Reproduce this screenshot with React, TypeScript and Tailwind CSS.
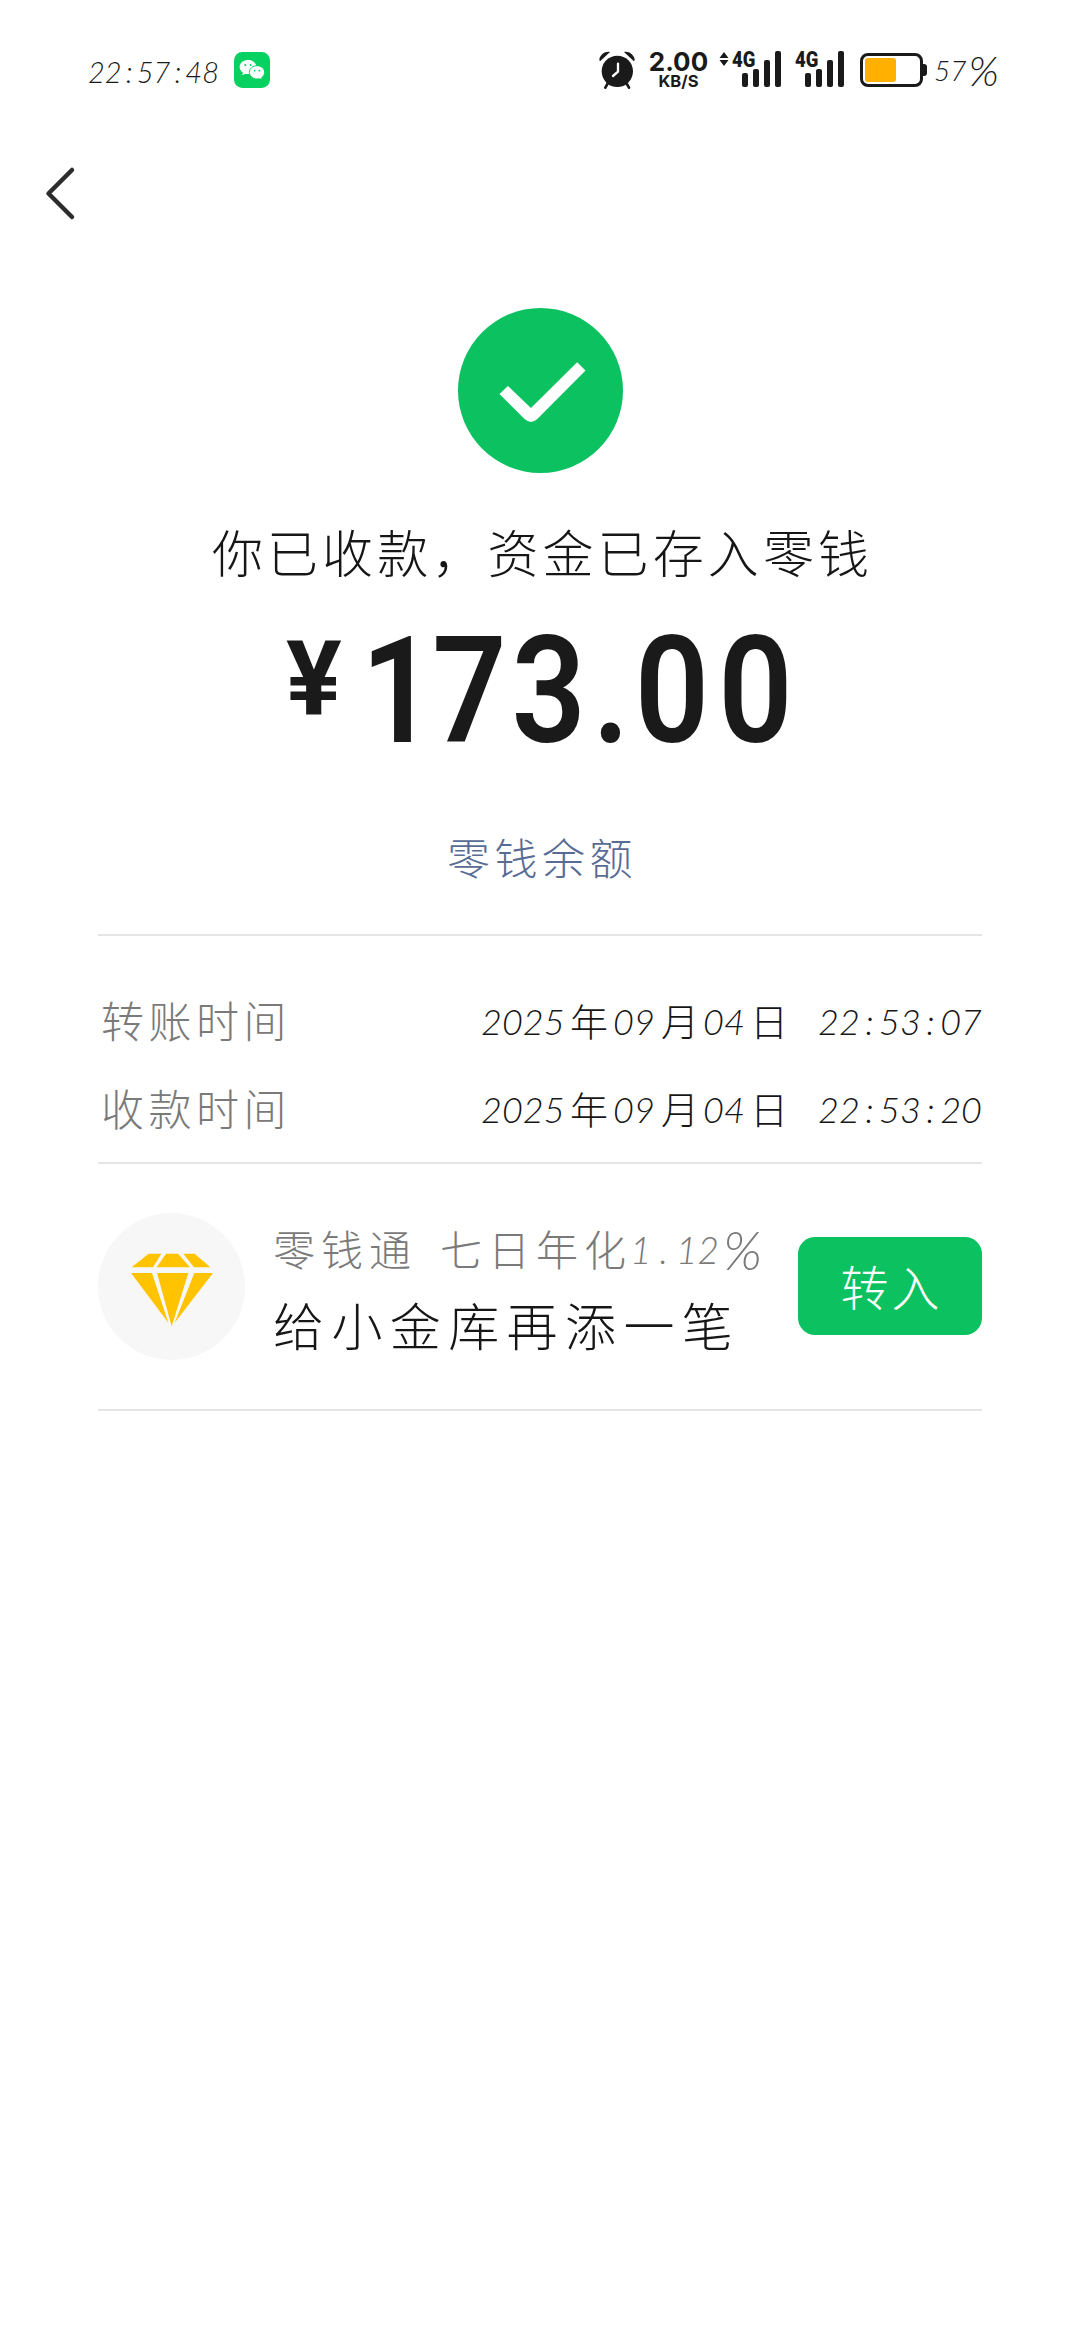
import React from 'react';

const HAND = "font-['Lato','Noto_Sans_CJK_SC',sans-serif] font-light";

function WeChatIcon() {
  return (
    <svg className="ml-[15px] h-9 w-9" viewBox="0 0 108 108">
      <rect width="108" height="108" rx="25" fill="#07d160" />
      <path d="M42 24C28 24 17 33 17 45c0 7 4 13 10 17l-3 8 10-5c3 1 5 1 8 1 14 0 25-9 25-21S56 24 42 24Z" fill="#fff" />
      <circle cx="34" cy="39" r="3" fill="#07d160" />
      <circle cx="50" cy="39" r="3" fill="#07d160" />
      <path d="M69 41c-13 0-23 9-23 20s10 20 23 20c3 0 5 0 8-1l8 4-2-7c5-4 9-9 9-16 0-11-10-20-23-20Z" fill="#fff" stroke="#07d160" strokeWidth="3" />
      <circle cx="62" cy="56" r="2.6" fill="#07d160" />
      <circle cx="76" cy="56" r="2.6" fill="#07d160" />
    </svg>
  );
}

function AlarmIcon() {
  return (
    <svg className="h-[38px] w-9" viewBox="0 0 108 114">
      <path d="M1 25C3 12 18 0 33 3L4 30Q0 30 1 25ZM107 25C105 12 90 0 75 3l29 27q4 0 3-5Z" fill="#1a1a1a" />
      <path d="M27 96 19 110M82 96l8 14" stroke="#1a1a1a" strokeWidth="8" strokeLinecap="round" />
      <circle cx="55" cy="61" r="47" fill="#1a1a1a" />
      <path d="M57 38v24L42 75" stroke="#fff" strokeWidth="7" fill="none" strokeLinecap="round" strokeLinejoin="round" />
    </svg>
  );
}

function Signal({ className }: { className: string }) {
  return (
    <div className={'relative mb-[2px] h-[38px] w-[49px] shrink-0 text-[#1a1a1a] ' + className}>
      <span className="absolute top-[-1px] left-0 origin-left scale-x-[0.84] font-['Roboto',sans-serif] text-[22px] leading-[22px] font-black">4G</span>
      <div className="flex h-full items-end justify-end gap-[5px] pb-px">
        <i className="h-[14px] w-[6px] rounded-[2px] bg-[#1a1a1a]" />
        <i className="h-[18px] w-[6px] rounded-[2px] bg-[#1a1a1a]" />
        <i className="h-[27px] w-[6px] rounded-[2px] bg-[#1a1a1a]" />
        <i className="h-[36px] w-[6px] rounded-[2px] bg-[#1a1a1a]" />
      </div>
    </div>
  );
}

function StatusBar() {
  return (
    <header className="flex h-[140px] items-center pl-[88px] text-[#1a1a1a]">
      <div className={HAND + ' flex w-[131px] justify-between pt-[3px] text-[29px] leading-9 italic whitespace-pre'}>
        <span>22</span><span>:</span><span>57</span><span>:</span><span>48</span>
      </div>
      <WeChatIcon />
      <div className="ml-[329px] flex items-center">
        <AlarmIcon />
        <div className="ml-[14px] flex w-[59px] flex-col items-center pb-[2px] font-['Inter',sans-serif]">
          <span className="text-[26px] leading-[23px] font-bold">2.00</span>
          <span className="text-[16.500px] leading-4 font-bold">KB/S</span>
        </div>
        <svg className="mb-[22px] ml-[11px] h-[14px] w-[10px]" viewBox="0 0 9 14">
          <path d="M4.5 0 9 6H0ZM4.5 14 0 8h9Z" fill="#1a1a1a" />
        </svg>
        <Signal className="ml-[3px]" />
        <Signal className="ml-[14px]" />
        <div className="ml-[16px] flex h-[34px] w-[63px] rounded-[8px] border-[3px] border-[#1a1a1a] p-[2px]">
          <div className="h-full w-[31px] rounded-[3px] bg-[#ffb000]" />
        </div>
        <div className="h-[12px] w-[4px] rounded-r-[3px] bg-[#1a1a1a]" />
        <div className={HAND + ' ml-[7px] flex items-center text-[28px] leading-9 italic'}>
          <span>57</span><span className="ml-[2px] text-[42px]">%</span>
        </div>
      </div>
    </header>
  );
}

function DateValue({ time }: { time: [string, string, string] }) {
  return (
    <div className="flex items-center pb-[2px] whitespace-pre text-[#161616]">
      <i className="w-[86px]">2025</i>
      <span className="w-[46px] pl-[3px] text-[38px]">年</span>
      <i className="w-[45px]">09</i>
      <span className="w-[45px] pl-[3px] text-[38px]">月</span>
      <i className="w-[45px]">04</i>
      <span className="w-[70px] pl-[2px] text-[38px]">日</span>
      <i className="flex w-[164px] justify-between">
        <span>{time[0]}</span><span>:</span><span>{time[1]}</span><span>:</span><span>{time[2]}</span>
      </i>
    </div>
  );
}

function Row({ label, time }: { label: string; time: [string, string, string] }) {
  return (
    <div className="flex h-[88px] items-center justify-between pl-[3px] text-[36px] leading-[86px]">
      <span className="text-[43px] tracking-[4.500px] text-[#7a7a7a]">{label}</span>
      <DateValue time={time} />
    </div>
  );
}

function Diamond() {
  return (
    <svg className="h-[147px] w-[147px] shrink-0" viewBox="53 69 441 441">
      <circle cx="273.500" cy="289.500" r="220.500" fill="#f7f7f7" />
      <path d="M205 191h38l-25 41h-64ZM257 191h36l36 41H229ZM309 191h34l47 41h-49ZM152 249h63l49 149ZM230 249h94l-50 160ZM342 249h56L283 398Z" fill="#ffc300" />
    </svg>
  );
}

export default function App() {
  return (
    <div className={HAND + ' h-[2344px] w-[1080px] overflow-hidden bg-white text-[#161616]'}>
      <StatusBar />
      <nav className="h-[168px] pt-[23px] pl-[44px]">
        <svg className="h-[60px] w-[34px]" viewBox="0 0 34 60" fill="none">
          <path d="M28 7 4.500 30.500 28 54" stroke="#2c2c2c" strokeWidth="4.500" strokeLinecap="round" strokeLinejoin="round" />
        </svg>
      </nav>
      <main className="px-[98px]">
        <section className="flex flex-col items-center">
          <svg className="h-[165px] w-[165px]" viewBox="56 55 493 493">
            <circle cx="302.500" cy="301.500" r="246.500" fill="#0bc160" />
            <path d="m180 312 25-24 69 66 138-137 25 25-144 145q-19 17-38 0Z" fill="#fff" />
          </svg>
          <h1 className="mt-[45px] pl-[5px] text-[51px] leading-[72px] tracking-[4.100px] whitespace-nowrap">你已收款，资金已存入零钱</h1>
          <div className="mt-[25px] flex h-[154px] w-[508px] font-['Roboto',sans-serif] text-[#1a1a1a]">
            <span className="mt-[4px] w-[76px] text-[104px] leading-[120px] font-bold">¥</span>
            <span className="ml-[19px] flex origin-left scale-x-[0.88] text-[148px] leading-[154px] font-semibold whitespace-nowrap">
              <span className="w-[81px]">1</span>
              <span className="w-[90px]">7</span>
              <span className="w-[92px]">3</span>
              <span className="w-[48px]">.</span>
              <span className="w-[95px]">0</span>
              <span>0</span>
            </span>
          </div>
          <a className="mt-[58px] pl-[4px] text-[43px] leading-[64px] tracking-[4.500px] text-[#576b95]">零钱余额</a>
        </section>
        <section className="mt-[43px] border-t-2 border-[#e5e5e5] pt-[42px] pb-[8px]">
          <Row label="转账时间" time={['22', '53', '07']} />
          <Row label="收款时间" time={['22', '53', '20']} />
        </section>
        <section className="flex h-[249px] border-y-2 border-[#e5e5e5] pt-[49px]">
          <Diamond />
          <div className="ml-[28px] flex-1 whitespace-nowrap">
            <div className="flex h-[74px] items-center text-[42px] leading-[74px] text-[#7a7a7a]">
              <span className="w-[167px] tracking-[6px]">零钱通</span>
              <span className="w-[190px] tracking-[6px]">七日年化</span>
              <i className="text-[37px]">1</i>
              <i className="px-[8px] text-[37px]">.</i>
              <i className="text-[37px]">12</i>
              <i className="ml-[4px] text-[54px]">%</i>
            </div>
            <div className="text-[51px] leading-[80px] tracking-[7.400px]">给小金库再添一笔</div>
          </div>
          <button className="mt-[24px] h-[98px] w-[184px] shrink-0 rounded-[17px] bg-[#0bc160] pt-[4px] pl-[3px] text-[48px] leading-[94px] tracking-[3px] text-white">转入</button>
        </section>
      </main>
    </div>
  );
}
